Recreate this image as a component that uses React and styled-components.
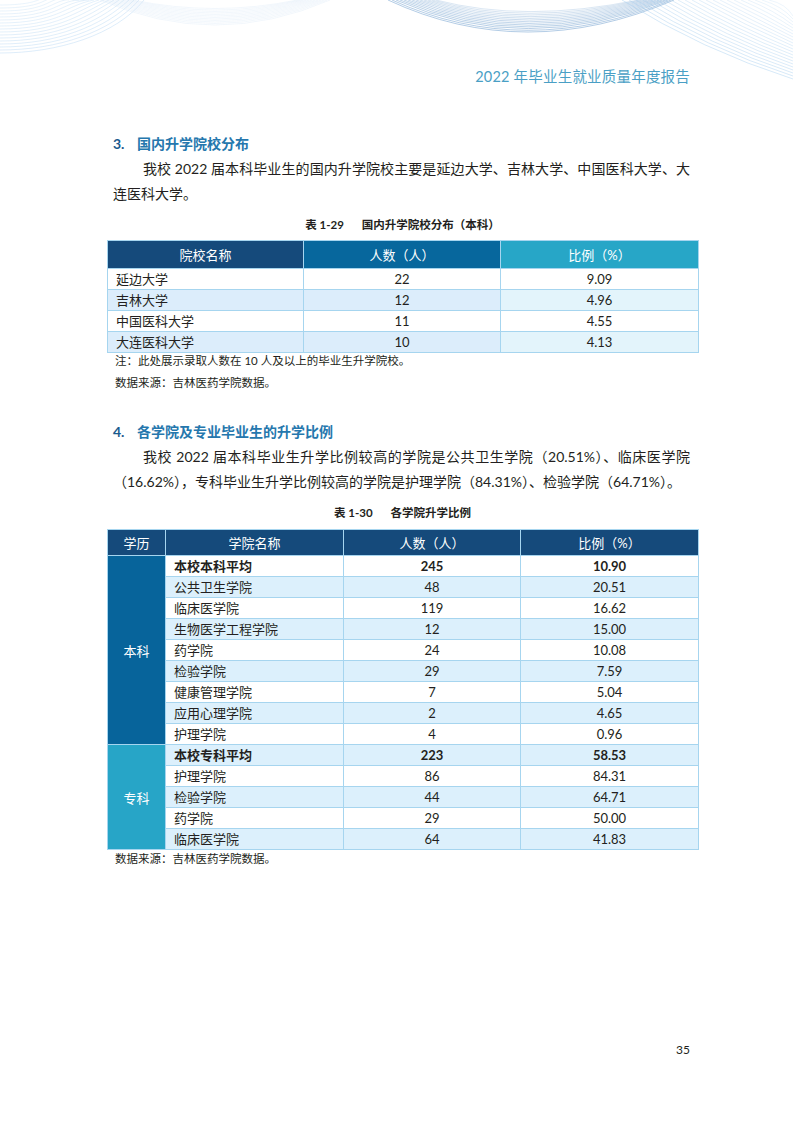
import styled, { createGlobalStyle } from "styled-components";

const GlobalStyle = createGlobalStyle`
  body {
    margin: 0;
    background: #fff;
  }
`;

const FONT = `Lato, "Noto Sans CJK SC", "Noto Sans", sans-serif`;
const LINE = "#a6d5ef";

const Page = styled.div`
  position: relative;
  width: 793px;
  min-height: 1122px;
  box-sizing: border-box;
  padding: 67px 95px 0 107px;
  display: flex;
  flex-direction: column;
  font-family: ${FONT};
  color: #231f20;
  overflow: hidden;
`;

const WaveLayer = styled.svg`
  position: absolute;
  top: 0;
  left: 0;
  pointer-events: none;
`;

const Content = styled.div`
  position: relative;
  display: flex;
  flex-direction: column;
`;

const ReportTitle = styled.div`
  align-self: flex-end;
  margin-right: 8px;
  font-size: 14.5px;
  line-height: 20px;
  color: #4a9fc5;
  letter-spacing: 0.2px;
`;

const SectionHeading = styled.h2`
  display: flex;
  margin: ${(p) => p.$gap}px 0 0;
  padding-left: 6px;
  font-size: 14px;
  font-weight: 700;
  line-height: 25px;
  color: #2577ad;
`;

const SectionNo = styled.span`
  width: 24px;
  color: #1b5b8e;
`;

const Paragraph = styled.p`
  margin: 0 8px 0 6px;
  font-size: 14px;
  line-height: 25px;
  text-indent: 30px;
  text-align: justify;
`;

const Caption = styled.div`
  margin-top: ${(p) => p.$gap}px;
  text-align: center;
  font-size: 11.5px;
  font-weight: 700;
  line-height: 18px;
  color: #231f20;
`;

const CaptionNo = styled.span`
  margin-right: 18px;
`;

const Table = styled.table`
  width: 591px;
  margin-top: ${(p) => p.$gap}px;
  border-collapse: collapse;
  table-layout: fixed;
  border: 1.5px solid ${LINE};
`;

const Th = styled.th`
  height: ${(p) => p.$h}px;
  padding: 0;
  background: ${(p) => p.$bg};
  color: #fff;
  font-size: 13px;
  font-weight: 400;
  border: 1.5px solid ${LINE};
`;

const Td = styled.td`
  height: 20px;
  padding: 0 8px;
  font-size: 13px;
  line-height: 19px;
  text-align: ${(p) => (p.$center ? "center" : "left")};
  font-weight: ${(p) => (p.$bold ? 700 : 400)};
  background: ${(p) => p.$bg || "#fff"};
  border: 1.5px solid ${LINE};
  white-space: nowrap;
`;

const GroupCell = styled.td`
  padding: 0;
  text-align: center;
  font-size: 13px;
  color: #fff;
  background: ${(p) => p.$bg};
  border: 1.5px solid ${LINE};
`;

const Note = styled.div`
  margin: ${(p) => p.$gap}px 0 0 8px;
  font-size: 11.5px;
  line-height: 16px;
`;

const PageNo = styled.div`
  margin-top: auto;
  align-self: flex-end;
  margin-right: 8px;
  padding-bottom: 64px;
  font-size: 12px;
  line-height: 16px;
`;

const range = (n) => Array.from({ length: n }, (_, i) => i);

function Waves() {
  return (
    <WaveLayer width="793" height="100" viewBox="0 0 793 100">
      {/* left fan */}
      {range(17).map((i) => (
        <path
          key={`l${i}`}
          d={`M0 ${53 - 3 * i} C58 ${53 - 3 * i} ${116 - 5 * i} ${35 - 3 * i} ${144 - 5 * i} 0`}
          fill="none"
          stroke="#a9d0f1"
          strokeOpacity={0.65 - i * 0.015}
          strokeWidth="0.6"
        />
      ))}
      {/* faint bowl */}
      {range(12).map((i) => (
        <path
          key={`f${i}`}
          d={`M${100 + i * 3} 0 Q${215} ${50 - i * 3} ${330 - i * 3} 0`}
          fill="none"
          stroke="#d6e7f7"
          strokeOpacity="0.55"
          strokeWidth="0.6"
        />
      ))}
      {/* centre bowl */}
      {range(13).map((i) => (
        <path
          key={`c${i}`}
          d={`M${388 + i * 4} 0 Q${525} ${64 - i * 3.4} ${674 - i * 3} 0`}
          fill="none"
          stroke="#5f93c8"
          strokeOpacity={0.8 - i * 0.035}
          strokeWidth="0.6"
        />
      ))}
      {/* right fan */}
      {range(22).map((i) => (
        <path
          key={`r${i}`}
          d={`M${622 + i * 7} 0 Q${702 + i * 4} ${50 - i * 2.2} 793 ${79 - i * 3}`}
          fill="none"
          stroke="#a4cdef"
          strokeOpacity={0.75 - i * 0.02}
          strokeWidth="0.6"
        />
      ))}
    </WaveLayer>
  );
}

const schools = [
  ["延边大学", "22", "9.09"],
  ["吉林大学", "12", "4.96"],
  ["中国医科大学", "11", "4.55"],
  ["大连医科大学", "10", "4.13"],
];

const groups = [
  {
    name: "本科",
    color: "#07649b",
    rows: [
      ["本校本科平均", "245", "10.90", true],
      ["公共卫生学院", "48", "20.51"],
      ["临床医学院", "119", "16.62"],
      ["生物医学工程学院", "12", "15.00"],
      ["药学院", "24", "10.08"],
      ["检验学院", "29", "7.59"],
      ["健康管理学院", "7", "5.04"],
      ["应用心理学院", "2", "4.65"],
      ["护理学院", "4", "0.96"],
    ],
  },
  {
    name: "专科",
    color: "#27a5c7",
    rows: [
      ["本校专科平均", "223", "58.53", true],
      ["护理学院", "86", "84.31"],
      ["检验学院", "44", "64.71"],
      ["药学院", "29", "50.00"],
      ["临床医学院", "64", "41.83"],
    ],
  },
];

function SchoolTable() {
  return (
    <Table $gap={6}>
      <colgroup>
        <col style={{ width: 196 }} />
        <col style={{ width: 197 }} />
        <col style={{ width: 198 }} />
      </colgroup>
      <thead>
        <tr>
          <Th $h={27} $bg="#154a7b">院校名称</Th>
          <Th $h={27} $bg="#07679d">人数（人）</Th>
          <Th $h={27} $bg="#27a6c7">比例（%）</Th>
        </tr>
      </thead>
      <tbody>
        {schools.map(([name, count, rate], i) => {
          const odd = i % 2 === 1;
          return (
            <tr key={name}>
              <Td $bg={odd ? "#dcedfb" : null}>{name}</Td>
              <Td $center $bg={odd ? "#dcedfb" : null}>{count}</Td>
              <Td $center $bg={odd ? "#e3f4fb" : null}>{rate}</Td>
            </tr>
          );
        })}
      </tbody>
    </Table>
  );
}

function CollegeTable() {
  let index = 0;
  return (
    <Table $gap={7}>
      <colgroup>
        <col style={{ width: 58 }} />
        <col style={{ width: 178 }} />
        <col style={{ width: 177 }} />
        <col style={{ width: 178 }} />
      </colgroup>
      <thead>
        <tr>
          <Th $h={25} $bg="#154a7b">学历</Th>
          <Th $h={25} $bg="#154a7b">学院名称</Th>
          <Th $h={25} $bg="#154a7b">人数（人）</Th>
          <Th $h={25} $bg="#154a7b">比例（%）</Th>
        </tr>
      </thead>
      <tbody>
        {groups.map((g) =>
          g.rows.map(([name, count, rate, bold], j) => {
            const bg = index++ % 2 === 1 ? "#dcf0fc" : null;
            return (
              <tr key={g.name + name}>
                {j === 0 && (
                  <GroupCell rowSpan={g.rows.length} $bg={g.color}>
                    {g.name}
                  </GroupCell>
                )}
                <Td $bold={bold} $bg={bg}>{name}</Td>
                <Td $center $bold={bold} $bg={bg}>{count}</Td>
                <Td $center $bold={bold} $bg={bg}>{rate}</Td>
              </tr>
            );
          })
        )}
      </tbody>
    </Table>
  );
}

export default function App() {
  return (
    <>
      <GlobalStyle />
      <Page>
        <Waves />
        <Content>
          <ReportTitle>2022 年毕业生就业质量年度报告</ReportTitle>

          <SectionHeading $gap={44}>
            <SectionNo>3.</SectionNo>国内升学院校分布
          </SectionHeading>
          <Paragraph>
            我校 2022 届本科毕业生的国内升学院校主要是延边大学、吉林大学、中国医科大学、大连医科大学。
          </Paragraph>

          <Caption $gap={10}>
            <CaptionNo>表 1-29</CaptionNo>国内升学院校分布（本科）
          </Caption>
          <SchoolTable />
          <Note $gap={0}>注：此处展示录取人数在 10 人及以上的毕业生升学院校。</Note>
          <Note $gap={6}>数据来源：吉林医药学院数据。</Note>

          <SectionHeading $gap={28}>
            <SectionNo>4.</SectionNo>各学院及专业毕业生的升学比例
          </SectionHeading>
          <Paragraph>
            我校 2022 届本科毕业生升学比例较高的学院是公共卫生学院（20.51%）、临床医学院（16.62%），专科毕业生升学比例较高的学院是护理学院（84.31%）、检验学院（64.71%）。
          </Paragraph>

          <Caption $gap={10}>
            <CaptionNo>表 1-30</CaptionNo>各学院升学比例
          </Caption>
          <CollegeTable />
          <Note $gap={1}>数据来源：吉林医药学院数据。</Note>
        </Content>
        <PageNo>35</PageNo>
      </Page>
    </>
  );
}
